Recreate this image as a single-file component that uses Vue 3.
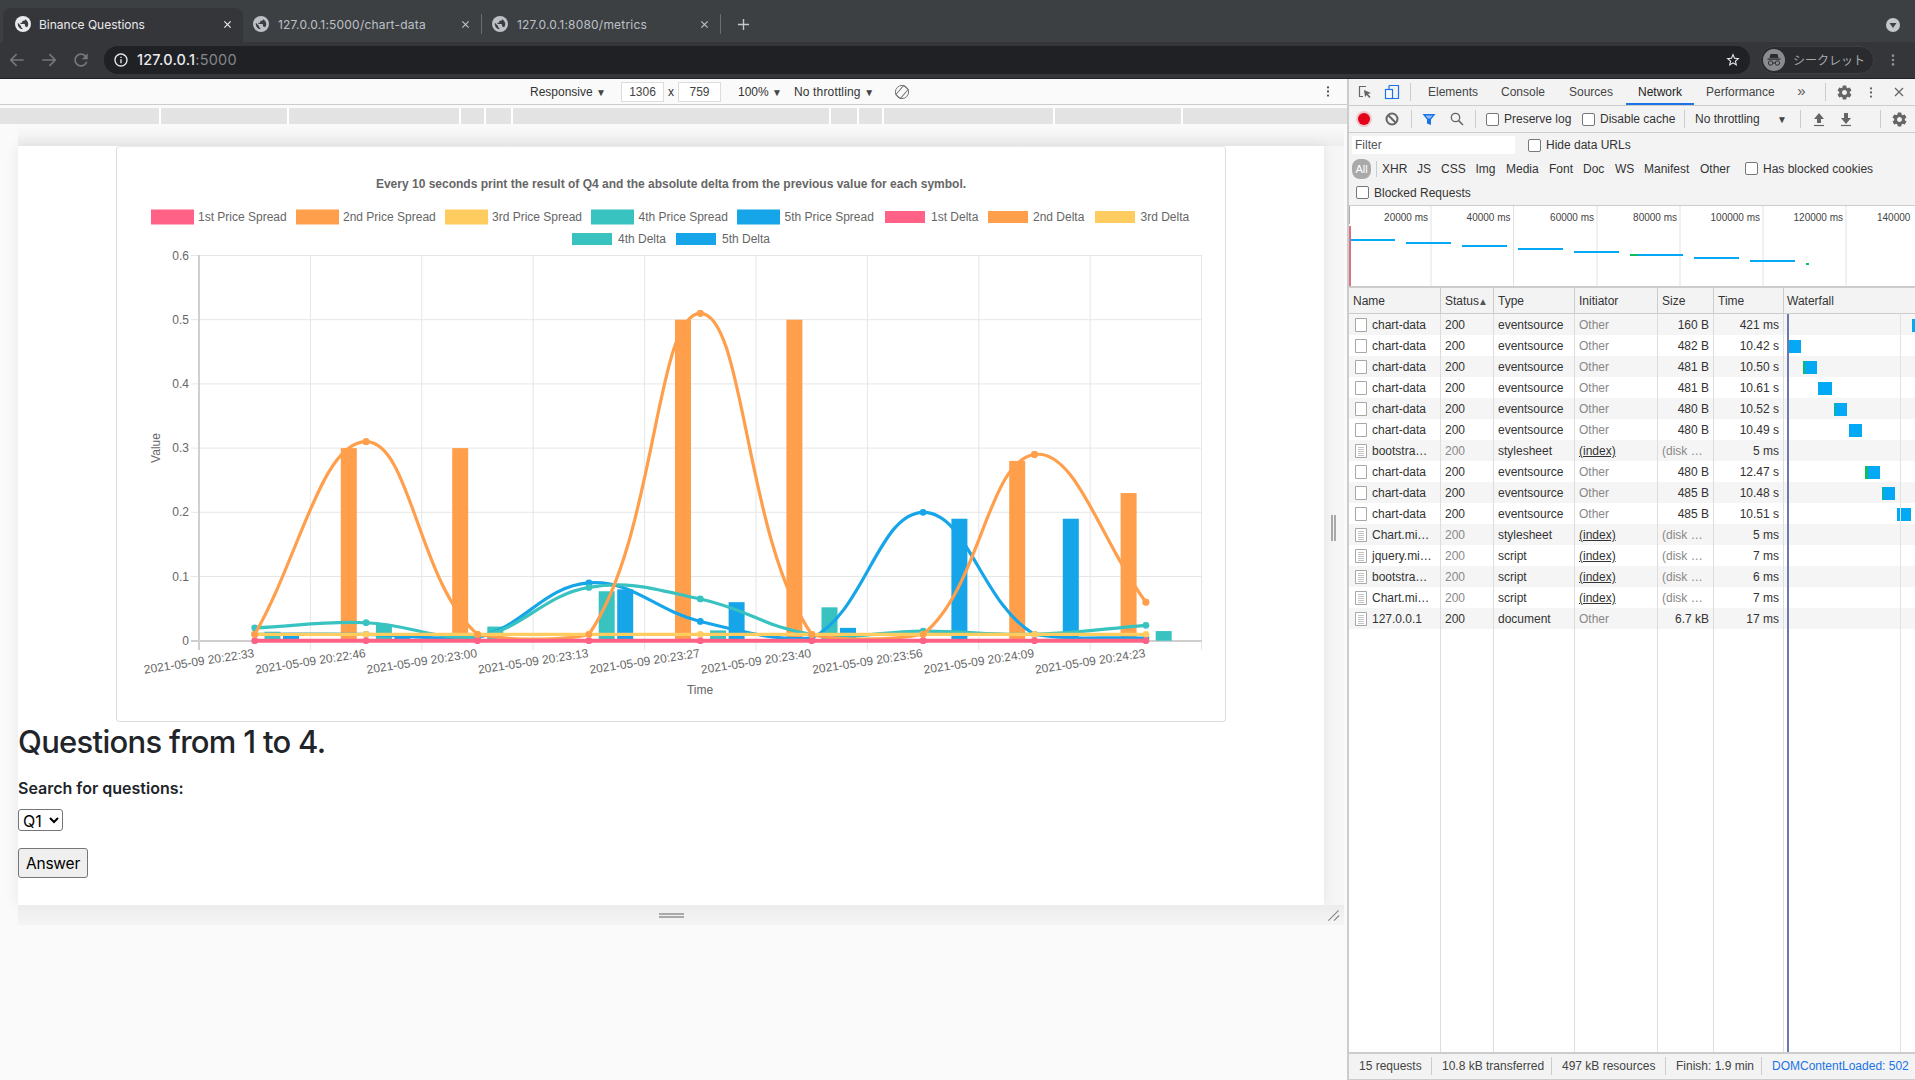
<script setup>
const LAND = 'M11 19.93c-3.95-.49-7-3.85-7-7.93 0-.62.08-1.21.21-1.79L9 15v1c0 1.1.9 2 2 2v1.93zM17.9 17.39c-.26-.81-1-1.39-1.9-1.39h-1v-3c0-.55-.45-1-1-1H8v-2h2c.55 0 1-.45 1-1V7h2c1.1 0 2-.9 2-2v-.41c2.93 1.19 5 4.06 5 7.41 0 2.08-.8 3.97-2.1 5.39z'
const GEAR = 'M19.43 12.98c.04-.32.07-.64.07-.98s-.03-.66-.07-.98l2.11-1.65c.19-.15.24-.42.12-.64l-2-3.46c-.12-.22-.39-.3-.61-.22l-2.49 1c-.52-.4-1.08-.73-1.69-.98l-.38-2.65C14.46 2.18 14.25 2 14 2h-4c-.25 0-.46.18-.49.42l-.38 2.65c-.61.25-1.17.59-1.69.98l-2.49-1c-.23-.09-.49 0-.61.22l-2 3.46c-.13.22-.07.49.12.64l2.11 1.65c-.04.32-.07.65-.07.98s.03.66.07.98l-2.11 1.65c-.19.15-.24.42-.12.64l2 3.46c.12.22.39.3.61.22l2.49-1c.52.4 1.08.73 1.69.98l.38 2.65c.03.24.24.42.49.42h4c.25 0 .46-.18.49-.42l.38-2.65c.61-.25 1.17-.59 1.69-.98l2.49 1c.23.09.49 0 .61-.22l2-3.46c.12-.22.07-.49-.12-.64l-2.11-1.65zM12 15.5c-1.93 0-3.5-1.57-3.5-3.5s1.57-3.5 3.5-3.5 3.5 1.57 3.5 3.5-1.57 3.5-3.5 3.5z'

const tabs = [
  { title: 'Binance Questions', active: true },
  { title: '127.0.0.1:5000/chart-data', active: false },
  { title: '127.0.0.1:8080/metrics', active: false }
]

const rulerGaps = [161, 128, 172, 25, 27, 318, 28, 25, 171, 128, 164]

const devTabs = [
  { name: 'Elements' }, { name: 'Console' }, { name: 'Sources' },
  { name: 'Network', on: true }, { name: 'Performance' }
]
const typeFilters = ['XHR', 'JS', 'CSS', 'Img', 'Media', 'Font', 'Doc', 'WS', 'Manifest', 'Other']

/* network table */
const es = (size, time, left, width, green = 0) => ({
  name: 'chart-data', status: '200', type: 'eventsource', init: 'Other', size, time, left, width, green
})
const disk = (name, type, time) => ({
  name, status: '200', type, init: '(index)', size: '(disk …', time, cached: true, left: 0, width: 0, green: 0
})
const rows = [
  es('160 B', '421 ms', 128, 3),
  es('482 B', '10.42 s', 4.5, 12.5),
  es('481 B', '10.50 s', 19, 13.5, 1.5),
  es('481 B', '10.61 s', 34, 14),
  es('480 B', '10.52 s', 50, 13, 1),
  es('480 B', '10.49 s', 65, 13),
  disk('bootstra…', 'stylesheet', '5 ms'),
  es('480 B', '12.47 s', 81, 15, 3),
  es('485 B', '10.48 s', 98, 13, 1),
  es('485 B', '10.51 s', 113, 14),
  disk('Chart.mi…', 'stylesheet', '5 ms'),
  disk('jquery.mi…', 'script', '7 ms'),
  disk('bootstra…', 'script', '6 ms'),
  disk('Chart.mi…', 'script', '7 ms'),
  { name: '127.0.0.1', status: '200', type: 'document', init: 'Other', size: '6.7 kB', time: '17 ms', cached: false, doc: true, left: 0, width: 0, green: 0 }
]

/* overview */
const ovLines = [1431, 1513.5, 1597, 1680, 1763, 1846]
const ovLabels = ['20000 ms', '40000 ms', '60000 ms', '80000 ms', '100000 ms', '120000 ms']
const ovSegs = [
  [1351, 1395, 240], [1406, 1451, 243], [1462, 1507, 246], [1518, 1563, 249],
  [1574, 1619, 252], [1638, 1683, 255], [1694, 1739, 258], [1750, 1795, 261]
]

/* chart */
const PINK = '#ff6286', ORANGE = '#ff9f4c', YELLOW = '#ffcc5f', TEAL = '#38c2c0', BLUE = '#16a5e9'
const X0 = 254.7, STEP = 111.4, Y0 = 640.7, SC = 642
const px = i => X0 + STEP * i
const py = v => Y0 - v * SC
const yTicks = [0.6, 0.5, 0.4, 0.3, 0.2, 0.1, 0]
const xGrid = Array.from({ length: 10 }, (_, i) => 199 + STEP * i)
const times = ['20:22:33', '20:22:46', '20:23:00', '20:23:13', '20:23:27', '20:23:40', '20:23:56', '20:24:09', '20:24:23']

/* Chart.js style spline: tension .4, control points capped to the chart area */
const capY = y => Math.min(Y0, Math.max(255, y))
function spline(vals) {
  const p = vals.map((v, i) => [px(i), py(v)])
  const cps = p.map((c, i) => {
    const a = p[i - 1] || c, b = p[i + 1] || c
    const d1 = Math.hypot(c[0] - a[0], c[1] - a[1]), d2 = Math.hypot(b[0] - c[0], b[1] - c[1])
    const tot = d1 + d2 || 1
    const f1 = 0.4 * d1 / tot, f2 = 0.4 * d2 / tot
    return {
      prev: [c[0] - f1 * (b[0] - a[0]), capY(c[1] - f1 * (b[1] - a[1]))],
      next: [c[0] + f2 * (b[0] - a[0]), capY(c[1] + f2 * (b[1] - a[1]))]
    }
  })
  let d = `M${p[0][0]} ${p[0][1]}`
  for (let i = 1; i < p.length; i++) {
    d += ` C${cps[i - 1].next[0]} ${cps[i - 1].next[1]} ${cps[i].prev[0]} ${cps[i].prev[1]} ${p[i][0]} ${p[i][1]}`
  }
  return d
}
const ORANGE_VALS = [0.01, 0.31, 0.01, 0.01, 0.51, 0.01, 0.01, 0.29, 0.06]
const series = [
  { c: BLUE, w: 3.2, v: [0.01, 0.01, 0.005, 0.09, 0.03, 0.004, 0.2, 0.01, 0.004] },
  { c: TEAL, w: 3.2, v: [0.02, 0.028, 0.006, 0.083, 0.065, 0.01, 0.015, 0.01, 0.024] },
  { c: ORANGE, w: 3.2, v: ORANGE_VALS },
  { c: YELLOW, w: 3.2, v: [0.01, 0.01, 0.01, 0.01, 0.01, 0.01, 0.01, 0.01, 0.01] },
  { c: PINK, w: 4, v: [0, 0, 0, 0, 0, 0, 0, 0, 0] }
].map(s => ({ ...s, d: spline(s.v), pts: s.v.map((v, i) => [px(i), py(v)]) }))
const orangeDots = ORANGE_VALS.map((v, i) => [px(i), py(v)])

const barSets = [
  { c: ORANGE, off: 30.4, v: [0, 0.3, 0.3, 0, 0.5, 0.5, 0, 0.28, 0.23] },
  { c: TEAL, off: 65.5, v: [0.014, 0.026, 0.022, 0.077, 0.016, 0.052, 0.002, 0.003, 0.015] },
  { c: BLUE, off: 84, v: [0.008, 0.01, 0, 0.08, 0.06, 0.02, 0.19, 0.19, 0] }
]
const bars = barSets.flatMap(s => s.v.map((v, i) => ({
  x: 199 + STEP * i + s.off, y: py(v), h: v * SC, c: s.c
})))

const legend = [
  { t: '1st Price Spread', x: 151, c: PINK, w: 43, tx: 198, r: 1 },
  { t: '2nd Price Spread', x: 296, c: ORANGE, w: 43, tx: 343, r: 1 },
  { t: '3rd Price Spread', x: 445, c: YELLOW, w: 43, tx: 492, r: 1 },
  { t: '4th Price Spread', x: 591, c: TEAL, w: 43, tx: 638.5, r: 1 },
  { t: '5th Price Spread', x: 737, c: BLUE, w: 43, tx: 784.5, r: 1 },
  { t: '1st Delta', x: 885, c: PINK, w: 40, tx: 931, r: 1, d: 1 },
  { t: '2nd Delta', x: 988, c: ORANGE, w: 40, tx: 1033, r: 1, d: 1 },
  { t: '3rd Delta', x: 1095, c: YELLOW, w: 40, tx: 1140.5, r: 1, d: 1 },
  { t: '4th Delta', x: 572, c: TEAL, w: 40, tx: 618, r: 2, d: 1 },
  { t: '5th Delta', x: 676, c: BLUE, w: 40, tx: 722, r: 2, d: 1 }
]
const footer = ['15 requests', '10.8 kB transferred', '497 kB resources', 'Finish: 1.9 min']
</script>

<template>
  <div class="root">
    <header class="tabstrip">
      <div v-for="t in tabs" :key="t.title" class="tab" :class="{ active: t.active }">
        <svg class="globe" viewBox="2 2 20 20">
          <circle cx="12" cy="12" r="10" fill="currentColor" />
          <path :d="LAND" fill="#3a3c40" transform="translate(12 12) scale(.82) translate(-12 -12)" />
        </svg>
        <span class="tab-title">{{ t.title }}</span>
        <svg class="tab-x" viewBox="0 0 10 10"><path d="M1.5 1.5l7 7M8.5 1.5l-7 7" stroke="currentColor" stroke-width="1.3" /></svg>
      </div>
      <svg class="plus" viewBox="0 0 14 14"><path d="M7 1v12M1 7h12" stroke="#c4c7cb" stroke-width="1.5" /></svg>
      <span class="strip-fill"></span>
      <span class="media-dot"><svg viewBox="0 0 14 14"><path d="M3.5 5h7L7 10z" fill="#3c4043" /></svg></span>
    </header>

    <div class="toolbar">
      <svg class="nav" viewBox="0 0 24 24"><path d="M20 12H5M11.5 5L4.5 12l7 7" fill="none" stroke="#75777b" stroke-width="2" /></svg>
      <svg class="nav" viewBox="0 0 24 24"><path d="M4 12h15M12.5 5l7 7-7 7" fill="none" stroke="#75777b" stroke-width="2" /></svg>
      <svg class="nav" viewBox="0 0 24 24"><path d="M17.65 6.35C16.2 4.9 14.21 4 12 4c-4.42 0-7.99 3.58-7.99 8s3.57 8 7.99 8c3.73 0 6.84-2.55 7.73-6h-2.08c-.82 2.33-3.04 4-5.65 4-3.31 0-6-2.69-6-6s2.69-6 6-6c1.66 0 3.14.69 4.22 1.78L13 11h7V4l-2.35 2.35z" fill="#75777b" /></svg>
      <div class="omni">
        <svg class="info" viewBox="0 0 24 24"><path d="M11 7h2v2h-2zm0 4h2v6h-2zm1-9C6.48 2 2 6.48 2 12s4.48 10 10 10 10-4.48 10-10S17.52 2 12 2zm0 18c-4.41 0-8-3.59-8-8s3.59-8 8-8 8 3.59 8 8-3.59 8-8 8z" fill="#e8eaed" /></svg>
        <span class="url"><b>127.0.0.1</b><i>:5000</i></span>
        <span class="strip-fill"></span>
        <svg class="star" viewBox="0 0 24 24"><path d="M22 9.24l-7.19-.62L12 2 9.19 8.63 2 9.24l5.46 4.73L5.82 21 12 17.27 18.18 21l-1.63-7.03L22 9.24zM12 15.4l-3.76 2.27 1-4.28-3.32-2.88 4.38-.38L12 6.1l1.71 4.04 4.38.38-3.32 2.88 1 4.28L12 15.4z" fill="#e8eaed" /></svg>
      </div>
      <div class="incog">
        <span class="avatar">
          <svg viewBox="0 0 22 22">
            <path d="M7.5 5h7l1 4h-9zM4.5 9.5h13v1.2h-13z" fill="#2b2c2f" />
            <circle cx="7.6" cy="14" r="2.2" fill="none" stroke="#2b2c2f" stroke-width="1" />
            <circle cx="14.4" cy="14" r="2.2" fill="none" stroke="#2b2c2f" stroke-width="1" />
            <path d="M9.8 14h2.4" stroke="#2b2c2f" />
          </svg>
        </span>
        <span class="incog-t">シークレット</span>
      </div>
      <svg class="kebab" viewBox="0 0 4 16"><circle cx="2" cy="3" r="1.5" /><circle cx="2" cy="8" r="1.5" /><circle cx="2" cy="13" r="1.5" /></svg>
    </div>

    <main class="main">
      <section class="stage">
        <div class="devicebar">
          <span class="db-resp">Responsive <em>▼</em></span>
          <span class="db-input">1306</span>
          <span class="db-x">x</span>
          <span class="db-input">759</span>
          <span class="db-zoom">100% <em>▼</em></span>
          <span class="db-thr">No throttling <em>▼</em></span>
          <svg class="db-rot" viewBox="0 0 16 16"><circle cx="8" cy="8" r="6.6" fill="none" stroke="#777" /><rect x="5" y="2" width="6" height="12" transform="rotate(40 8 8)" fill="none" stroke="#777" /></svg>
          <span class="strip-fill"></span>
          <svg class="db-kebab" viewBox="0 0 4 16"><circle cx="2" cy="3" r="1.4" /><circle cx="2" cy="8" r="1.4" /><circle cx="2" cy="13" r="1.4" /></svg>
        </div>
        <div class="ruler">
          <span v-for="(g, i) in rulerGaps" :key="i" class="ruler-seg" :style="{ width: g + 'px' }"></span>
        </div>

        <div class="viewport">
          <div class="page-row">
            <div class="page">
              <div class="card">
                <svg class="chart" viewBox="116 146 1109 575" width="1109" height="575">
                  <text x="671" y="188" class="c-title" text-anchor="middle">Every 10 seconds print the result of Q4 and the absolute delta from the previous value for each symbol.</text>
                  <g v-for="l in legend" :key="l.t">
                    <rect :x="l.x" :y="(l.r === 1 ? 217 : 239) - (l.d ? 6 : 7.5)" :width="l.w" :height="l.d ? 12 : 15" :fill="l.c" />
                    <text :x="l.tx" :y="l.r === 1 ? 221 : 243" class="c-text">{{ l.t }}</text>
                  </g>

                  <g stroke="#e6e6e6" stroke-width="1">
                    <line v-for="t in yTicks.slice(0, 6)" :key="t" x1="191" :x2="1202" :y1="py(t)" :y2="py(t)" />
                    <line v-for="x in xGrid.slice(1)" :key="x" :x1="x" :x2="x" y1="255" y2="650" />
                  </g>
                  <line x1="191" x2="1202" y1="641" y2="641" stroke="#cfcfcf" stroke-width="2" />
                  <line x1="199" x2="199" y1="255" y2="650" stroke="#cfcfcf" stroke-width="2" />

                  <text v-for="t in yTicks" :key="'y' + t" x="189" :y="py(t) + 4" class="c-text" text-anchor="end">{{ t }}</text>
                  <text v-for="(t, i) in times" :key="t" class="c-text" text-anchor="end" :transform="`translate(${px(i)} 657) rotate(-8.7)`">2021-05-09 {{ t }}</text>
                  <text x="700" y="694" class="c-text" text-anchor="middle">Time</text>
                  <text class="c-text" text-anchor="middle" transform="translate(160 448) rotate(-90)">Value</text>

                  <rect v-for="(b, i) in bars" :key="i" :x="b.x" :y="b.y" width="16" :height="b.h" :fill="b.c" />
                  <g v-for="s in series" :key="s.c">
                    <path :d="s.d" fill="none" :stroke="s.c" :stroke-width="s.w" />
                    <circle v-for="(p, i) in s.pts" :key="i" :cx="p[0]" :cy="p[1]" r="3.4" :fill="s.c" />
                  </g>
                  <circle v-for="(p, i) in orangeDots.filter((_, k) => k !== 0 || true)" :key="'o' + i" :cx="p[0]" :cy="p[1]" r="3.4" :fill="ORANGE" />
                </svg>
              </div>
              <h2 class="heading">Questions from 1 to 4.</h2>
              <label class="search-label">Search for questions:</label>
              <select class="sel"><option>Q1</option></select>
              <button class="answer">Answer</button>
            </div>
            <div class="rail"><span class="grip-v"></span></div>
          </div>
          <div class="handle">
            <span class="grip-h"></span>
            <svg class="resize" viewBox="0 0 14 14"><path d="M12.5 1.5L1.5 12.5M13 7l-5.5 5.5" stroke="#8a8a8a" stroke-width="1.3" /></svg>
          </div>
        </div>
      </section>

      <aside class="devtools">
        <div class="dt-tabs">
          <svg class="ic" viewBox="0 0 16 16"><path d="M9 2.5H2.5v10H6" fill="none" stroke="#666" stroke-width="1.2" /><path d="M7 6l7 3-3 1 2.5 3-1.2 1-2.5-3L8 13z" fill="#666" /></svg>
          <svg class="ic" viewBox="0 0 16 16"><path d="M5 1.5h9.5v13H5M5 1.5v4" fill="none" stroke="#1a73e8" stroke-width="1.2" /><rect x="1.5" y="5.5" width="7" height="9" fill="#fff" stroke="#1a73e8" stroke-width="1.2" /></svg>
          <span class="sep"></span>
          <span v-for="t in devTabs" :key="t.name" class="dt-tab" :class="{ on: t.on }">{{ t.name }}</span>
          <span class="more">»</span>
          <span class="sep"></span>
          <svg class="ic gear" viewBox="0 0 24 24"><path :d="GEAR" fill="#666" /></svg>
          <svg class="ic-k" viewBox="0 0 4 16"><circle cx="2" cy="3" r="1.4" /><circle cx="2" cy="8" r="1.4" /><circle cx="2" cy="13" r="1.4" /></svg>
          <svg class="ic-x" viewBox="0 0 10 10"><path d="M1 1l8 8M9 1l-8 8" stroke="#666" stroke-width="1.3" /></svg>
        </div>

        <div class="dt-net">
          <span class="rec"></span>
          <svg class="ic" viewBox="0 0 16 16"><circle cx="8" cy="8" r="5.5" fill="none" stroke="#666" stroke-width="2" /><path d="M4 4l8 8" stroke="#666" stroke-width="2" /></svg>
          <span class="sep"></span>
          <svg class="ic" viewBox="0 0 16 16"><path d="M1.5 3h13L10 8.5V14l-4-1.5v-4z" fill="#1a73e8" /><path d="M4.5 4.5h7L9 7.5H7z" fill="#8fc0f5" /></svg>
          <svg class="ic" viewBox="0 0 16 16"><circle cx="6.5" cy="6.5" r="4.2" fill="none" stroke="#666" stroke-width="1.3" /><path d="M9.6 9.6l4.4 4.4" stroke="#666" stroke-width="1.5" /></svg>
          <span class="sep"></span>
          <label class="chk pad6"><span class="box"></span>Preserve log</label>
          <label class="chk"><span class="box"></span>Disable cache</label>
          <span class="sep"></span>
          <span class="thr"><span>No throttling</span><em>▼</em></span>
          <span class="sep"></span>
          <svg class="ic" viewBox="0 0 16 16"><path d="M8 2l5 6H10v4H6V8H3z" fill="#666" /><path d="M3 14.5h10" stroke="#666" stroke-width="1.2" /></svg>
          <svg class="ic" viewBox="0 0 16 16"><path d="M8 13l5-6H10V2H6v5H3z" fill="#666" /><path d="M3 14.5h10" stroke="#666" stroke-width="1.2" /></svg>
          <span></span>
          <span class="sep"></span>
          <svg class="ic gear" viewBox="0 0 24 24"><path :d="GEAR" fill="#666" /></svg>
        </div>

        <div class="dt-filter">
          <span class="filter-input">Filter</span>
          <label class="chk"><span class="box"></span>Hide data URLs</label>
        </div>

        <div class="dt-types">
          <span class="all">All</span>
          <span class="sep"></span>
          <span v-for="t in typeFilters" :key="t" class="ty">{{ t }}</span>
          <label class="chk"><span class="box"></span>Has blocked cookies</label>
        </div>

        <div class="dt-blocked">
          <label class="chk"><span class="box"></span>Blocked Requests</label>
        </div>

        <svg class="overview" viewBox="1349 206 566 80" width="566" height="80">
          <line x1="1349.5" x2="1349.5" y1="206" y2="224" stroke="#aaa" />
          <line x1="1350" x2="1350" y1="226" y2="286" stroke="#c0152f" stroke-width="1.2" />
          <line v-for="x in ovLines" :key="x" :x1="x" :x2="x" y1="206" y2="286" stroke="#e2e2e2" />
          <text v-for="(l, i) in ovLabels" :key="l" :x="ovLines[i] - 3" y="220.5" class="ov-t" text-anchor="end">{{ l }}</text>
          <text x="1877" y="220.5" class="ov-t">140000</text>
          <line v-for="s in ovSegs" :key="s[0]" :x1="s[0]" :x2="s[1]" :y1="s[2]" :y2="s[2]" stroke="#03a9f4" stroke-width="2" />
          <line x1="1630" x2="1638" y1="255" y2="255" stroke="#0fbd5e" stroke-width="2" />
          <line x1="1806" x2="1809" y1="264" y2="264" stroke="#0fbd5e" stroke-width="2" />
        </svg>

        <div class="table">
          <div class="tr th">
            <span>Name</span><span>Status<i class="sort">▲</i></span><span>Type</span><span>Initiator</span><span>Size</span><span>Time</span><span>Waterfall</span>
          </div>
          <div v-for="(r, i) in rows" :key="i" class="tr td" :class="{ odd: i % 2 === 0 }">
            <span class="c-name">
              <svg class="file" viewBox="0 0 12 14">
                <path d="M.5.5h11v13H.5z" fill="#fff" stroke="#a8a8a8" />
                <path v-if="r.cached || r.doc" d="M3 3.5h6M3 5.5h6M3 7.5h6M3 9.5h6M3 11.5h6" stroke="#c4c4c4" />
              </svg>
              {{ r.name }}
            </span>
            <span :class="{ dim: r.cached }">{{ r.status }}</span>
            <span>{{ r.type }}</span>
            <span :class="r.init === 'Other' ? 'dim' : 'link'">{{ r.init }}</span>
            <span :class="r.cached ? 'dim' : 'right'">{{ r.size }}</span>
            <span class="right">{{ r.time }}</span>
            <span class="wf">
              <i v-if="r.green" class="g" :style="{ left: r.left + 'px', width: r.green + 'px' }"></i>
              <i v-if="r.width" class="b" :style="{ left: r.left + r.green + 'px', width: r.width - r.green + 'px' }"></i>
              <i v-if="r.cached || r.doc" class="m"></i>
            </span>
          </div>
          <div class="tr filler"><span></span><span></span><span></span><span></span><span></span><span></span><span></span></div>
          <i class="wf-line grid"></i>
          <i class="wf-line dcl"></i>
        </div>

        <footer class="dt-foot">
          <span v-for="f in footer" :key="f" class="ft">{{ f }}</span>
          <span class="ft dcl-t">DOMContentLoaded: 502</span>
        </footer>
      </aside>
    </main>
  </div>
</template>

<style>
html, body { margin: 0; padding: 0; background: #fafafa; overflow: hidden; }
</style>

<style scoped>
.root { width: 1915px; height: 1080px; display: flex; flex-direction: column; overflow: hidden; font-family: "Liberation Sans", Arial, sans-serif; font-size: 12px; color: #333; }
.strip-fill { flex: 1; }

/* browser chrome */
.tabstrip { height: 42px; box-sizing: border-box; padding: 8px 0 0 3px; display: flex; align-items: stretch; background: #3d4043; }
.tab { width: 239px; height: 20px; box-sizing: border-box; padding: 0 11px 0 10px; margin-top: 6px; display: flex; align-items: center; color: #bdc1c6; border-right: 1px solid #6a6d70; }
.tab.active { color: #e8eaed; background: #35363a; border: 0; height: 34px; margin: 0; padding: 0 11px 2px 12px; width: 240px; border-radius: 8px 8px 0 0; }
.globe { width: 16px; height: 16px; flex: none; }
.tab-title { flex: 1; margin-left: 8px; font-family: Inter, sans-serif; font-size: 12px; white-space: nowrap; }
.tab:not(.active) .tab-title { margin-left: 9px; letter-spacing: .2px; }
.tab-x { width: 9px; height: 9px; flex: none; }
.plus { width: 13px; height: 13px; margin: 10px 0 0 16px; }
.media-dot { width: 14px; height: 14px; border-radius: 50%; background: #c4c7ca; margin: 10px 15px 0 0; }
.media-dot svg { display: block; }
.toolbar { height: 37px; box-sizing: border-box; background: #35363a; border-bottom: 1px solid #202124; display: flex; align-items: center; padding: 0 0 1px 7px; }
.nav { width: 20px; height: 20px; margin-right: 12px; flex: none; }
.omni { width: 1646px; height: 28px; margin-left: 1px; background: #202124; border-radius: 14px; display: flex; align-items: center; padding: 0 9px 0 9px; box-sizing: border-box; }
.info { width: 16px; height: 16px; flex: none; }
.url { margin-left: 8px; font-family: Inter, sans-serif; font-size: 14.5px; letter-spacing: .2px; }
.url b { color: #e8eaed; font-weight: 500; }
.url i { color: #83868a; font-style: normal; }
.star { width: 16px; height: 16px; }
.incog { width: 114px; height: 28px; margin-left: 10px; box-sizing: border-box; border-radius: 14px; background: #2a2b2e; border: 1px solid #3e3f43; display: flex; align-items: center; padding-left: 2px; }
.avatar { width: 22px; height: 22px; border-radius: 50%; background: #8a8b8e; flex: none; }
.avatar svg { display: block; }
.incog-t { margin-left: 8px; color: #a8aaae; font-family: "Noto Sans CJK JP", sans-serif; font-size: 12px; white-space: nowrap; }
.kebab { width: 4px; height: 14px; margin-left: 17px; fill: #8d8f92; }

.main { flex: 1; display: flex; min-height: 0; }
.stage { width: 1347px; flex: none; background: #fafafa; display: flex; flex-direction: column; }
.devicebar { height: 25px; box-sizing: content-box; border-bottom: 1px solid #ccc; background: #fafafa; display: flex; align-items: center; font-size: 12px; color: #333; padding-left: 530px; padding-right: 17px; }
.devicebar em, .thr em { font-style: normal; font-size: 10px; color: #444; }
.db-resp { width: 91px; white-space: nowrap; }
.db-input { width: 41px; height: 18px; line-height: 18px; text-align: center; background: #fff; border: 1px solid #ddd; color: #444; }
.db-x { width: 14px; text-align: center; }
.db-zoom { width: 56px; margin-left: 17px; white-space: nowrap; }
.db-thr { width: 100px; white-space: nowrap; letter-spacing: .15px; }
.db-rot { width: 16px; height: 16px; }
.db-kebab { width: 4px; height: 13px; fill: #555; }
.ruler { height: 16px; margin-top: 3px; background: #e3e3e3; display: flex; }
.ruler-seg { display: block; height: 16px; border-right: 2px solid #fff; box-sizing: border-box; flex: none; }
.ruler-seg:last-child { border-right: 0; }
.viewport { margin-left: 18px; width: 1326px; padding-top: 22px; background: linear-gradient(to bottom, #fbfbfb 0, #ededed 22px, #f5f5f5 22px); background-repeat: no-repeat; }
.page-row { display: flex; }
.page { width: 1306px; height: 759px; box-sizing: border-box; background: #fff; display: flex; flex-direction: column; align-items: flex-start; box-shadow: 0 0 14px rgba(0,0,0,.08); position: relative; }
.card { margin-left: 98px; width: 1110px; height: 576px; box-sizing: border-box; border: 1px solid #ddd; border-top-color: #ececec; border-radius: 4px; overflow: hidden; flex: none; }
.chart { display: block; margin: -1px; font-family: "Liberation Sans", Arial, sans-serif; }
.c-title { font-size: 12px; font-weight: 700; fill: #666; }
.c-text { font-size: 12px; fill: #666; }
.heading { margin: 1px 0 0; font-family: Inter, sans-serif; font-size: 31px; letter-spacing: -.7px; line-height: 38px; font-weight: 500; color: #212529; }
.search-label { margin-top: 15px; font-family: Inter, sans-serif; font-size: 16px; line-height: 24px; font-weight: 600; color: #212529; }
.sel { margin-top: 9px; width: 45px; height: 22px; box-sizing: border-box; font-family: Inter, sans-serif; font-size: 16px; background: #fff; color: #000; border: 1px solid #767676; border-radius: 3px; padding: 0; }
.answer { margin-top: 17px; width: 70px; height: 30px; box-sizing: border-box; font-family: Inter, sans-serif; font-size: 15.5px; letter-spacing: -.2px; color: #000; background: #efefef; border: 1px solid #767676; border-radius: 3px; padding: 0; }
.rail { width: 20px; background: #f6f6f6; display: flex; align-items: center; justify-content: center; }
.grip-v { width: 5px; height: 26px; border-left: 2px solid #aaa; border-right: 2px solid #aaa; box-sizing: border-box; margin-top: 4px; margin-left: -1px; }
.handle { height: 20px; background: linear-gradient(to bottom, #ececec, #f5f5f5); position: relative; }
.grip-h { position: absolute; left: 641px; top: 8px; width: 25px; height: 5px; border-top: 2px solid #aaa; border-bottom: 2px solid #aaa; box-sizing: border-box; }
.resize { position: absolute; right: 4px; top: 4px; width: 13px; height: 13px; }

/* devtools */
.devtools { width: 568px; flex: none; box-sizing: border-box; border-left: 2px solid #ccc; background: #f3f3f3; display: flex; flex-direction: column; color: #333; }
.dt-tabs, .dt-net, .dt-types { display: grid; align-items: center; justify-items: center; box-sizing: border-box; padding-left: 3px; }
.dt-tabs { height: 27px; border-bottom: 1px solid #ccc; grid-template-columns: 26px 27px 11px 73px 68px 69px 68px 91px 33px 14px 25px 28px 28px; }
.dt-tab { justify-self: stretch; height: 26px; line-height: 26px; padding-left: 12px; box-sizing: border-box; white-space: nowrap; color: #444; }
.dt-tab.on { color: #222; border-bottom: 2px solid #1a73e8; }
.more { font-size: 15px; color: #555; margin-top: -3px; }
.sep { width: 1px; height: 18px; background: #ccc; }
.ic { width: 16px; height: 16px; }
.ic.gear { width: 17px; height: 17px; }
.ic-k { width: 4px; height: 13px; fill: #666; }
.ic-x { width: 10px; height: 10px; }
.dt-net { height: 27px; border-bottom: 1px solid #ccc; grid-template-columns: 24px 32px 6px 30px 26px 10px 102px 98px 8px 107px 10px 27px 28px 15px 10px 28px; }
.rec { width: 12px; height: 12px; border-radius: 50%; background: #e50019; box-shadow: 0 0 0 2px rgba(229,0,25,.18); }
.chk { display: flex; align-items: center; white-space: nowrap; color: #333; justify-self: start; }
.chk.pad6 { margin-left: 6px; }
.box { width: 11px; height: 11px; margin-right: 5px; background: #fff; border: 1px solid #777; border-radius: 2px; flex: none; }
.thr { justify-self: stretch; padding: 0 8px 0 7px; display: flex; justify-content: space-between; align-items: center; }
.dt-filter { height: 24px; display: flex; align-items: center; padding-left: 3px; box-sizing: border-box; }
.filter-input { width: 163px; height: 18px; line-height: 18px; background: #fff; padding-left: 3px; box-sizing: border-box; color: #555; margin-right: 13px; }
.dt-types { height: 23px; grid-template-columns: 19px 11px 35px 24px 34.5px 30.5px 43px 34px 32px 29px 56px 45px auto; justify-items: start; justify-content: start; }
.all { width: 19px; height: 20px; line-height: 20px; border-radius: 8px; background: #a9a9a9; color: #fff; text-align: center; font-size: 11px; }
.dt-types .sep { justify-self: center; height: 16px; }
.ty { color: #333; }
.dt-blocked { height: 26px; display: flex; align-items: center; padding-left: 7px; box-sizing: border-box; border-bottom: 1px solid #ccc; }
.overview { display: block; background: #fff; flex: none; }
.ov-t { font-size: 10px; fill: #444; }

.table { flex: 1; min-height: 0; position: relative; display: flex; flex-direction: column; border-top: 2px solid #ccc; background: #fff; overflow: hidden; }
.tr { display: grid; grid-template-columns: 92px 53px 81px 83px 56px 70px 131px; flex: none; }
.tr > span { border-right: 1px solid #ddd; box-sizing: border-box; padding: 0 4px; white-space: nowrap; overflow: hidden; }
.tr > span:last-child { border-right: 0; }
.th { height: 26px; line-height: 26px; background: #f3f3f3; border-bottom: 1px solid #ccc; box-sizing: border-box; color: #333; }
.th > span { border-right-color: #ccc; padding-left: 4px; }
.th > span:last-child { padding-left: 3px; }
.sort { font-style: normal; font-size: 10px; color: #555; margin-left: -1px; }
.td { height: 21px; line-height: 22px; color: #333; }
.td.odd { background: #f5f5f5; }
.c-name { display: flex; align-items: center; padding-left: 6px !important; }
.file { width: 12px; height: 14px; flex: none; margin-right: 5px; }
.dim { color: #888; }
.link { color: #333; text-decoration: underline; }
.right { text-align: right; }
.wf { position: relative; padding: 0 !important; }
.wf i { position: absolute; top: 5px; height: 13px; }
.wf .b { background: #03a9f4; }
.wf .g { background: #0fbd5e; }
.wf .m { left: 3px; width: 2px; background: #1a6fb5; }
.filler { flex: 1; }
.filler > span { height: 100%; }
.wf-line { position: absolute; top: 26px; bottom: 0; }
.wf-line.grid { left: 551px; width: 1px; background: #e2e2e2; }
.wf-line.dcl { left: 438px; width: 2px; background: #6c78b0; }
.dt-foot { height: 28px; flex: none; box-sizing: border-box; border-top: 2px solid #ccc; border-bottom: 1px solid #ccc; padding-bottom: 1px; background: #f3f3f3; display: grid; grid-template-columns: 83px 120px 114px 96px auto; align-items: center; color: #444; }
.ft { height: 18px; line-height: 18px; border-right: 1px solid #ccc; padding-left: 10px; box-sizing: border-box; white-space: nowrap; }
.ft.dcl-t { border: 0; color: #1a73e8; overflow: hidden; }
</style>
